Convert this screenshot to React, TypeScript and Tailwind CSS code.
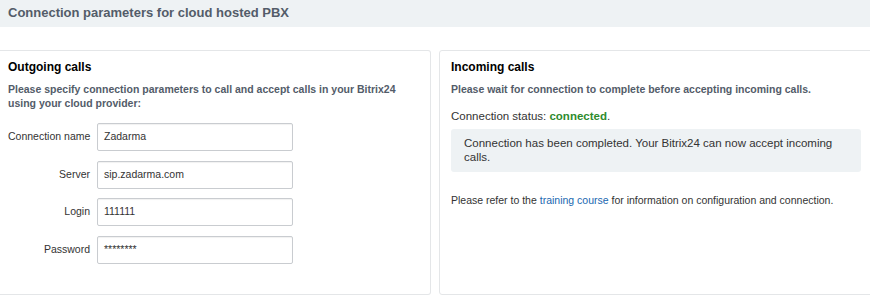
const FIELDS = [
  { label: "Connection name", value: "Zadarma" },
  { label: "Server", value: "sip.zadarma.com" },
  { label: "Login", value: "111111" },
  { label: "Password", value: "********" },
]

export default function App() {
  return (
    <div className="w-[870px] h-[299px] overflow-hidden bg-white font-['Liberation_Sans',Arial,sans-serif] text-[#333]">
      {/* Page title */}
      <div className="h-[27px] bg-[#eef2f4] px-[8px] flex items-center pb-[3px]">
        <h1 className="text-[13px] font-bold text-[#535c69] leading-none">Connection parameters for cloud hosted PBX</h1>
      </div>

      <div className="flex gap-[8px] mt-[23px] w-[900px]">
        {/* Outgoing */}
        <div className="w-[431px] h-[245px] flex-shrink-0 border border-l-0 border-[#e4e6e8] rounded-r-[3px] pl-[8px] pr-[14px] pt-[8px]">
          <h2 className="text-[12px] leading-[16px] font-bold text-black">Outgoing calls</h2>
          <p className="mt-[7px] text-[10.5px] leading-[14px] font-bold text-[#535c69]">
            Please specify connection parameters to call and accept calls in your Bitrix24 using your cloud provider:
          </p>
          <div className="mt-[13px] flex flex-col gap-[9.5px]">
            {FIELDS.map((f) => (
              <div key={f.label} className="flex items-center gap-[7px]">
                <label className="w-[82px] whitespace-nowrap text-right text-[10.5px] text-[#333]">{f.label}</label>
                <div className="w-[196px] h-[28px] border border-[#c9ccd0] rounded-[2px] shadow-[inset_0_1px_1px_rgba(0,0,0,0.06)] flex items-center px-[6px] text-[10.5px] text-[#333]">
                  {f.value}
                </div>
              </div>
            ))}
          </div>
        </div>

        {/* Incoming */}
        <div className="w-[434px] h-[245px] flex-shrink-0 border border-[#e4e6e8] rounded-[3px] px-[11px] pt-[8px]">
          <h2 className="text-[12px] leading-[16px] font-bold text-black">Incoming calls</h2>
          <p className="mt-[7px] text-[10.5px] leading-[14px] font-bold text-[#535c69]">
            Please wait for connection to complete before accepting incoming calls.
          </p>
          <p className="mt-[12px] text-[11.5px] leading-[16px] text-[#333]">
            Connection status: <span className="font-bold text-[#2e8b2e]">connected</span>.
          </p>
          <div className="mt-[5px] bg-[#eef2f4] rounded-[3px] pl-[13px] pr-[13px] pt-[7px] pb-[8px] text-[11.5px] leading-[14px] text-[#333]">
            Connection has been completed. Your Bitrix24 can now accept incoming calls.
          </div>
          <p className="mt-[21px] text-[10.5px] leading-[14px] text-[#333]">
            Please refer to the <a className="text-[#2067b0]">training course</a> for information on configuration and connection.
          </p>
        </div>
      </div>
    </div>
  )
}
